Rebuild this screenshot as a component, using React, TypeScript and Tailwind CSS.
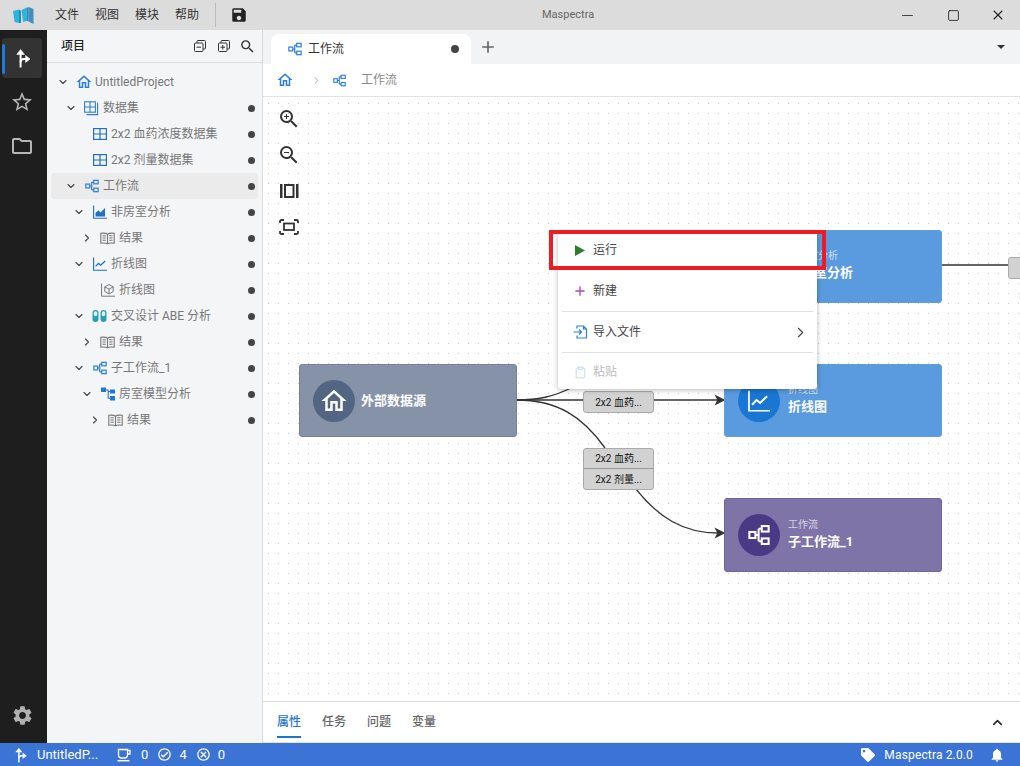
import React from "react";
import { ChevronDown, ChevronRight, ChevronUp, Minus, Square, X, Clipboard } from "lucide-react";
import { MdSettings, MdSave, MdNotifications, MdOutlineHome, MdZoomIn, MdZoomOut, MdSearch, MdStarBorder, MdOutlineFolder, MdAdd, MdOutlineCheckCircle, MdOutlineCancel } from "react-icons/md";
import { FaTag } from "react-icons/fa";

const BLUE = "#2f7fd6";

function Flow({ size = 14, color = BLUE, sw = 1.4 }: { size?: number; color?: string; sw?: number }) {
  return (
    <svg width={size} height={size} viewBox="0 0 16 16" fill="none" stroke={color} strokeWidth={sw} className="shrink-0">
      <rect x="1" y="5.8" width="4.4" height="4.4" />
      <rect x="10" y="1.5" width="5" height="4" />
      <rect x="10" y="10.5" width="5" height="4" />
      <path d="M5.4 8H7.7M7.7 3.5V12.5M7.7 3.5H10M7.7 12.5H10" />
    </svg>
  );
}
function Grid() {
  return (
    <svg width="14" height="14" viewBox="0 0 14 14" fill="none" stroke="#1f6fc4" strokeWidth="1.2" className="shrink-0">
      <rect x="0.6" y="1.6" width="12.8" height="10.8" />
      <path d="M7 1.6V12.4M0.6 7H13.4" />
    </svg>
  );
}
function GridSet() {
  return (
    <svg width="15" height="15" viewBox="0 0 15 15" fill="none" stroke="#2f7fd6" strokeWidth="1.1" className="shrink-0">
      <rect x="0.6" y="0.8" width="10.8" height="10.4" />
      <path d="M6 0.8V11.2M0.6 6H11.4M13.6 1.5V13.6H2.5" />
    </svg>
  );
}
function Book() {
  return (
    <svg width="15" height="13" viewBox="0 0 15 13" fill="none" stroke="#777" strokeWidth="1.1" className="shrink-0">
      <path d="M7.5 2.2C6 1 3 1 0.8 1.3V11.2C3 10.9 6 10.9 7.5 11.8C9 10.9 12 10.9 14.2 11.2V1.3C12 1 9 1 7.5 2.2ZM7.5 2.2V11.8M2.5 3.7H5.8M2.5 6H5.8M2.5 8.3H5.8M9.2 3.7H12.5M9.2 6H12.5M9.2 8.3H12.5" />
    </svg>
  );
}
function AreaIcon({ color = "#1f6fc4" }: { color?: string }) {
  return (
    <svg width="14" height="14" viewBox="0 0 14 14" className="shrink-0">
      <path d="M0.6 0.5V13.2H14" fill="none" stroke={color} strokeWidth="1.1" />
      <path d="M2.5 11.5V8L5.3 5.3L7.5 7.4L12 3V11.5Z" fill={color} />
    </svg>
  );
}
function LineIcon({ color = "#1f6fc4", size = 14 }: { color?: string; size?: number }) {
  return (
    <svg width={size} height={size} viewBox="0 0 14 14" fill="none" stroke={color} strokeWidth="1.1" className="shrink-0">
      <path d="M0.6 0.5V13.2H14" />
      <path d="M2.6 9.4L5.4 6.4L7.7 8.2L12.2 4" strokeWidth="1.3" />
    </svg>
  );
}
function Cube() {
  return (
    <svg width="14" height="14" viewBox="0 0 14 14" fill="none" stroke="#777" strokeWidth="1" className="shrink-0">
      <path d="M0.6 0.5V13.2H14" />
      <path d="M8 1.5L12.2 3.8V8.6L8 11L3.8 8.6V3.8ZM3.8 3.8L8 6.2L12.2 3.8M8 6.2V11" />
    </svg>
  );
}
function Pills() {
  return (
    <svg width="15" height="14" viewBox="0 0 15 14" className="shrink-0">
      <rect x="0.5" y="1" width="6" height="12" rx="3" fill="#2b9cb8" />
      <rect x="1.8" y="2.2" width="3.4" height="5" rx="1.7" fill="#e8f6fa" />
      <rect x="8.5" y="1" width="6" height="12" rx="3" fill="#2b9cb8" />
      <rect x="9.8" y="2.2" width="3.4" height="5" rx="1.7" fill="#e8f6fa" />
    </svg>
  );
}
function CompIcon() {
  return (
    <svg width="14" height="14" viewBox="0 0 14 14" className="shrink-0" fill="none">
      <rect x="0" y="0.5" width="5" height="4.5" fill="#1f78d8" />
      <rect x="9" y="2.5" width="5" height="4" fill="#1f78d8" />
      <rect x="9" y="9" width="5" height="4.5" fill="#1f78d8" />
      <path d="M5 3H7.2V11.2H9M7.2 4.5H9" stroke="#1f78d8" strokeWidth="1.1" />
    </svg>
  );
}
function Branch({ size = 20, sw = 2 }: { size?: number; sw?: number }) {
  return (
    <svg width={size} height={size} viewBox="0 0 20 20" fill="none" stroke="#fff" strokeWidth={sw} className="shrink-0">
      <path d="M8.6 19.5V4" />
      <path d="M4.8 6.4L8.6 1.5L12.4 6.4Z" fill="#fff" strokeWidth="0.6" />
      <path d="M8.6 14C8.6 12 10 11 12 11H15" />
      <path d="M13.6 7.6L18 11L13.6 14.4Z" fill="#fff" strokeWidth="0.6" />
    </svg>
  );
}
function Collapse({ plus }: { plus?: boolean }) {
  return (
    <svg width="12" height="12" viewBox="0 0 12 12" fill="none" stroke="#333" strokeWidth="1">
      <rect x="0.5" y="3" width="8.5" height="8.5" rx="1" />
      <path d="M3 2.9V1.5C3 .9 3.4 .5 4 .5H10.5C11.1 .5 11.5 .9 11.5 1.5V8C11.5 8.6 11.1 9 10.5 9H9.2" />
      <path d="M2.5 7.2H7" />
      {plus && <path d="M4.75 5V9.5" />}
    </svg>
  );
}

type Row = { label: string; pad: string; open?: boolean; closed?: boolean; icon: React.ReactNode; sel?: boolean; noDot?: boolean };
const rows: Row[] = [
  { label: "UntitledProject", pad: "pl-[6px]", open: true, icon: <MdOutlineHome size={18} color={BLUE} className="shrink-0" />, noDot: true },
  { label: "数据集", pad: "pl-[14px]", open: true, icon: <GridSet /> },
  { label: "2x2 血药浓度数据集", pad: "pl-[22px]", icon: <Grid /> },
  { label: "2x2 剂量数据集", pad: "pl-[22px]", icon: <Grid /> },
  { label: "工作流", pad: "pl-[14px]", open: true, icon: <Flow />, sel: true },
  { label: "非房室分析", pad: "pl-[22px]", open: true, icon: <AreaIcon /> },
  { label: "结果", pad: "pl-[30px]", closed: true, icon: <Book /> },
  { label: "折线图", pad: "pl-[22px]", open: true, icon: <LineIcon /> },
  { label: "折线图", pad: "pl-[30px]", icon: <Cube /> },
  { label: "交叉设计 ABE 分析", pad: "pl-[22px]", open: true, icon: <Pills /> },
  { label: "结果", pad: "pl-[30px]", closed: true, icon: <Book /> },
  { label: "子工作流_1", pad: "pl-[22px]", open: true, icon: <Flow /> },
  { label: "房室模型分析", pad: "pl-[30px]", open: true, icon: <CompIcon /> },
  { label: "结果", pad: "pl-[38px]", closed: true, icon: <Book /> },
];

function TreeRow({ r }: { r: Row }) {
  return (
    <div className={`flex h-[26px] items-center pr-[3px] rounded ${r.pad} ${r.sel ? "bg-[#ebebeb]" : ""}`}>
      <div className="flex w-3 shrink-0 justify-center">
        {r.open && <ChevronDown size={14} color="#444" strokeWidth={2.2} />}
        {r.closed && <ChevronRight size={14} color="#444" strokeWidth={2.2} />}
      </div>
      <div className="ml-[7px] flex w-[15px] shrink-0 justify-center">{r.icon}</div>
      <span className="ml-[4px] flex-1 text-xs whitespace-nowrap text-[#777]">{r.label}</span>
      {!r.noDot && <span className="size-[7px] rounded-full bg-[#444]" />}
    </div>
  );
}

function Node({ pos, bg, border, circle, icon, sub, title }: { pos: string; bg: string; border: string; circle: string; icon: React.ReactNode; sub?: string; title: string }) {
  return (
    <div className={`absolute flex w-[218px] items-center rounded-[3px] border pl-[13px] ${pos} ${bg} ${border}`}>
      <div className={`flex size-[42px] shrink-0 items-center justify-center rounded-full ${circle}`}>{icon}</div>
      <div className={`flex flex-col text-white ${sub ? "ml-[8px] pb-[2px]" : "ml-[6px]"}`}>
        {sub && <span className="mb-[2px] text-[10px] leading-[13px] text-white/70">{sub}</span>}
        <span className="text-[13px] leading-[18px] font-bold">{title}</span>
      </div>
    </div>
  );
}

function EdgeLabel({ pos, items }: { pos: string; items: string[] }) {
  return (
    <div className={`absolute w-[71px] divide-y divide-[#999] rounded-[3px] border border-[#aaa] bg-[#d2d2d2] ${pos}`}>
      {items.map((t) => (
        <div key={t} className="flex h-[20px] items-center justify-center text-[10px] whitespace-nowrap text-[#111]">{t}</div>
      ))}
    </div>
  );
}

function MenuItem({ icon, label, right, muted, h }: { icon: React.ReactNode; label: string; right?: boolean; muted?: boolean; h: string }) {
  return (
    <div className={`flex items-center pr-2 pl-[14px] ${h}`}>
      <div className="flex w-[16px] justify-center">{icon}</div>
      <span className={`ml-[5px] flex-1 text-xs ${muted ? "text-[#bbb]" : "text-[#444]"}`}>{label}</span>
      {right && <ChevronRight size={17} color="#444" strokeWidth={1.6} />}
    </div>
  );
}

export default function App() {
  return (
    <div className="flex h-[766px] w-[1020px] flex-col overflow-hidden bg-white font-['Roboto','Noto_Sans_CJK_SC',sans-serif]">
      {/* title bar */}
      <div className="relative flex h-[30px] shrink-0 items-center bg-[#dcdcdc]">
        <svg width="21" height="19" viewBox="0 0 21 19" className="ml-[13px] shrink-0">
          <path d="M0 5L6 3.5V17L1.5 16Z" fill="#2fb4dc" />
          <path d="M6 3.5L8 5V17H6Z" fill="#1f8fbc" />
          <path d="M8.5 4L13.5 1.5V15L10 16Z" fill="#2fb4dc" />
          <path d="M13.5 1.5H15.5V15H13.5Z" fill="#1f8fbc" />
          <path d="M15.5 1L20.5 3V18L15.5 15.5Z" fill="#3f90ba" />
        </svg>
        <div className="ml-[21px] flex gap-[16px] text-xs text-[#333]">
          <span>文件</span><span>视图</span><span>模块</span><span>帮助</span>
        </div>
        <div className="ml-[16px] h-[24px] w-px bg-[#bbb]" />
        <MdSave size={18} color="#222" className="ml-[14px]" />
        <span className="absolute left-[542px] text-[11px] text-[#666]">Maspectra</span>
        <div className="ml-auto flex items-center">
          <Minus size={17} color="#444" strokeWidth={1.6} className="mr-[31px]" />
          <Square size={13} color="#222" strokeWidth={1.6} className="mr-[30px]" />
          <X size={16} color="#222" strokeWidth={1.6} className="mr-[14px]" />
        </div>
      </div>

      <div className="flex min-h-0 flex-1">
        {/* activity bar */}
        <div className="flex w-[47px] shrink-0 flex-col items-center bg-[#1e1e1e] pt-[8px] pb-[16px]">
          <div className="relative ml-[-3px] flex size-[40px] items-center justify-center rounded bg-[#333]">
            <div className="absolute top-[6px] left-0 h-[30px] w-[3px] rounded bg-[#1f78d8]" />
            <Branch />
          </div>
          <MdStarBorder size={24} color="#b5b5b5" className="mt-[12px] ml-[-3px]" />
          <MdOutlineFolder size={24} color="#b5b5b5" className="mt-[20px] ml-[-3px]" />
          <MdSettings size={23} color="#b0b0b0" className="mt-auto ml-[-3px]" />
        </div>

        {/* sidebar */}
        <div className="flex w-[216px] shrink-0 flex-col border-r border-[#d9d9d9] bg-[#f4f5f7]">
          <div className="flex h-[33px] shrink-0 items-center border-b border-[#dcdcdc] pr-[6px] pl-[14px]">
            <span className="flex-1 text-xs font-medium text-[#222]">项目</span>
            <Collapse />
            <span className="ml-[12px]"><Collapse plus /></span>
            <MdSearch size={17} color="#333" className="ml-[9px]" />
          </div>
          <div className="mr-[4px] ml-[4px] pt-[6px]">
            {rows.map((r, i) => <TreeRow key={i} r={r} />)}
          </div>
        </div>

        {/* main */}
        <div className="flex min-w-0 flex-1 flex-col">
          <div className="flex h-[34px] shrink-0 items-end bg-[#f2f3f5] pl-[8px]">
            <div className="flex h-[30px] w-[200px] items-center rounded-t-lg bg-white pr-[12px] pl-[17px]">
              <Flow />
              <span className="ml-[6px] flex-1 text-xs text-[#333]">工作流</span>
              <span className="size-2 rounded-full bg-[#444]" />
            </div>
            <MdAdd size={20} color="#666" className="mb-[7px] ml-[7px]" />
            <div className="mr-[15px] mb-[15px] ml-auto h-0 w-0 border-x-[4px] border-t-[4px] border-x-transparent border-t-[#333]" />
          </div>
          <div className="flex h-[33px] shrink-0 items-center border-b border-[#e2e2e2] pl-[13px]">
            <MdOutlineHome size={18} color={BLUE} />
            <ChevronRight size={11} color="#888" strokeWidth={1.6} className="ml-[17px]" />
            <span className="ml-[11px]"><Flow size={13} /></span>
            <span className="ml-[15px] text-xs text-[#888]">工作流</span>
          </div>

          {/* canvas */}
          <div className="relative min-h-0 flex-1 overflow-hidden bg-white bg-[radial-gradient(circle_at_5.5px_6.5px,#cccccc_0.6px,transparent_0.7px)] bg-[size:10px_10px]">
            <div className="absolute top-[10px] left-[14px] flex flex-col items-center gap-[12px]">
              <MdZoomIn size={24} color="#333" />
              <MdZoomOut size={24} color="#333" />
              <svg width="24" height="24" viewBox="0 0 24 24" fill="#333"><rect x="3" y="5" width="2.5" height="14" /><rect x="19" y="5" width="2.5" height="14" /><path d="M7 5H17.5V19H7ZM9 7V17H15.5V7Z" fillRule="evenodd" /></svg>
              <svg width="24" height="24" viewBox="0 0 24 24" fill="none" stroke="#333" strokeWidth="1.8"><path d="M3 8V6.5C3 5.7 3.7 5 4.5 5H7M17 5H19.5C20.3 5 21 5.7 21 6.5V8M21 16V17.5C21 18.3 20.3 19 19.5 19H17M7 19H4.5C3.7 19 3 18.3 3 17.5V16" /><rect x="7" y="8.5" width="10" height="6.5" /></svg>
            </div>

            <svg width="757" height="604" className="absolute top-0 left-0" fill="none" stroke="#333" strokeWidth="1.3">
              <path d="M253 303C275 303 290 300 310 290" />
              <path d="M253 303H455" />
              <path d="M253 303C295 303 320 320 342 351" />
              <path d="M373 392C395 420 420 436 455 436" />
              <path d="M679 168H745" />
              <path d="M461 303L453 299L455 303L453 307Z" fill="#333" />
              <path d="M461 436L453 432L455 436L453 440Z" fill="#333" />
            </svg>

            <Node pos="top-[267px] left-[36px] h-[73px]" bg="bg-[#7e8ca3]/95" border="border-[#76839a]" circle="bg-[#526582]" icon={<MdOutlineHome size={30} color="#fff" />} title="外部数据源" />
            <Node pos="top-[133px] left-[461px] h-[73px]" bg="bg-[#5195dc]/95" border="border-[#5f9fe0]" circle="bg-[#1976d2]" icon={<AreaIcon color="#fff" />} sub="非房室分析" title="非房室分析" />
            <Node pos="top-[267px] left-[461px] h-[73px]" bg="bg-[#5195dc]/95" border="border-[#5f9fe0]" circle="bg-[#1976d2]" icon={<LineIcon color="#fff" size={22} />} sub="折线图" title="折线图" />
            <Node pos="top-[401px] left-[461px] h-[74px]" bg="bg-[#776da3]/95" border="border-[#6c629c]" circle="bg-[#4a3a85]" icon={<Flow size={22} color="#fff" sw={1.5} />} sub="工作流" title="子工作流_1" />

            <EdgeLabel pos="top-[294px] left-[320px]" items={["2x2 血药..."]} />
            <EdgeLabel pos="top-[351px] left-[320px]" items={["2x2 血药...", "2x2 剂量..."]} />
            <EdgeLabel pos="top-[160px] left-[745px]" items={["2x2 血药..."]} />

            {/* context menu */}
            <div className="absolute top-[135px] left-[295px] w-[259px] rounded-[3px] bg-white shadow-[0_1px_5px_rgba(0,0,0,0.3)]">
              <MenuItem h="h-[36px]" icon={<svg width="10" height="11" viewBox="0 0 10 11"><path d="M0 0L10 5.5L0 11Z" fill="#2e7d32" /></svg>} label="运行" />
              <MenuItem h="h-[43px] pt-[2px]" icon={<MdAdd size={18} color="#ab47bc" />} label="新建" />
              <div className="mx-[4px] h-px bg-[#e0e0e0]" />
              <MenuItem h="h-[40px]" icon={<svg width="15" height="14" viewBox="0 0 15 14" fill="none" stroke="#2f7fd6" strokeWidth="1.2"><path d="M4 3.5V1H10.5L13.5 4V13H4V10.5M10.5 1V4H13.5" /><path d="M0.5 7H8.5M6 4.5L8.5 7L6 9.5" /></svg>} label="导入文件" right />
              <div className="mx-[4px] h-px bg-[#e0e0e0]" />
              <MenuItem h="h-[36px] pt-[2px]" icon={<Clipboard size={13} color="#b6d3f2" strokeWidth={1.6} />} label="粘贴" muted />
            </div>
            <div className="absolute top-[133px] left-[286px] h-[40px] w-[277px] border-[4px] border-[#ed1c24]" />
          </div>

          {/* bottom panel */}
          <div className="flex h-[42px] shrink-0 items-start border-y border-t-[#dcdcdc] border-b-[#e4e4e4] pr-[15px] pl-[14px]">
            <div className="flex gap-[21px] pt-[12px] text-xs font-medium text-[#666]">
              <span className="border-b-2 border-[#1976d2] pb-[6px] text-[#1976d2]">属性</span>
              <span>任务</span>
              <span>问题</span>
              <span>变量</span>
            </div>
            <ChevronUp size={15} color="#222" strokeWidth={2.4} className="mt-[13px] ml-auto" />
          </div>
        </div>
      </div>

      {/* status bar */}
      <div className="flex h-[23px] shrink-0 items-center bg-[#3c74d6] pr-[15px] pl-[12px] text-[13px] text-white">
        <Branch size={16} sw={1.8} />
        <span className="ml-[9px]">UntitledP...</span>
        <svg width="14" height="14" viewBox="0 0 14 14" fill="none" stroke="#fff" strokeWidth="1.3" className="ml-[19px] shrink-0">
          <path d="M1.5 1.5H10.5V7C10.5 8.6 9.2 10 7.5 10H4.5C2.8 10 1.5 8.6 1.5 7Z" />
          <path d="M10.5 2.5H13V6H10.5" />
          <path d="M0.5 12.7H12.5" strokeWidth="1.5" />
        </svg>
        <span className="ml-[10px]">0</span>
        <MdOutlineCheckCircle size={15} color="#fff" className="ml-[9px]" />
        <span className="ml-[7px]">4</span>
        <MdOutlineCancel size={15} color="#fff" className="ml-[9px]" />
        <span className="ml-[7px]">0</span>
        <FaTag size={14} color="#fff" className="ml-auto" />
        <span className="ml-[9px] text-xs tracking-[0.15px]">Maspectra 2.0.0</span>
        <MdNotifications size={16} color="#fff" className="ml-[16px]" />
      </div>
    </div>
  );
}
